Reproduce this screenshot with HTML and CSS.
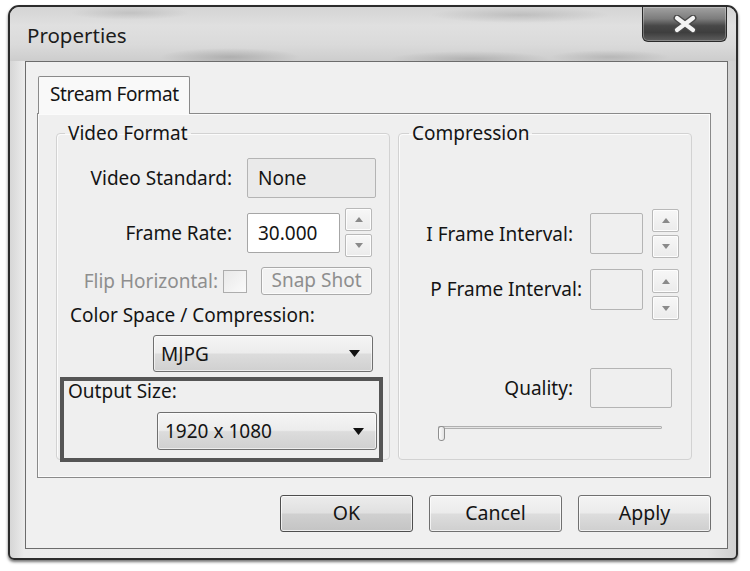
FILE: index.html
```html
<!DOCTYPE html>
<html>
<head>
<meta charset="utf-8">
<title>Properties</title>
<link rel="stylesheet" href="styles.css">
</head>
<body>
<div class="window">
  <div class="titlebar">
    <div class="title">Properties</div>
    <div class="close">
      <svg width="26" height="18" viewBox="0 0 26 18">
        <path d="M5 3 L21 15 M21 3 L5 15" stroke="#4a4a4a" stroke-width="7" stroke-linecap="round" fill="none"/>
        <path d="M5 3 L21 15 M21 3 L5 15" stroke="#f4f4f4" stroke-width="4.2" stroke-linecap="round" fill="none"/>
      </svg>
    </div>
  </div>
  <div class="frame">
    <div class="client">
      <div class="tabs"><div class="tab">Stream Format</div></div>
      <div class="page">
        <fieldset class="group group-video">
          <legend class="legend">Video Format</legend>
          <div class="row row-std">
            <span class="lbl lbl-main">Video Standard:</span>
            <div class="field field-none">None</div>
          </div>
          <div class="row row-rate">
            <span class="lbl lbl-main">Frame Rate:</span>
            <div class="field field-rate">30.000</div>
            <div class="spin spin-rate">
              <div class="spin-btn"><svg width="8" height="5" viewBox="0 0 8 5"><polygon points="4,0 8,5 0,5" fill="#8a8a8a"/></svg></div>
              <div class="spin-btn"><svg width="8" height="5" viewBox="0 0 8 5"><polygon points="0,0 8,0 4,5" fill="#8a8a8a"/></svg></div>
            </div>
          </div>
          <div class="row row-flip">
            <span class="lbl lbl-flip disabled">Flip Horizontal:</span>
            <div class="check"></div>
            <div class="snap disabled">Snap Shot</div>
          </div>
          <div class="text-row">Color Space / Compression:</div>
          <div class="combo combo-mjpg">
            <span class="combo-text">MJPG</span>
            <svg class="combo-arrow" width="11" height="7" viewBox="0 0 11 7"><polygon points="0,0 11,0 5.5,7" fill="#111"/></svg>
          </div>
          <div class="output">
            <div class="output-label">Output Size:</div>
            <div class="combo combo-size">
              <span class="combo-text">1920 x 1080</span>
              <svg class="combo-arrow" width="11" height="7" viewBox="0 0 11 7"><polygon points="0,0 11,0 5.5,7" fill="#111"/></svg>
            </div>
          </div>
        </fieldset>
        <fieldset class="group group-comp">
          <legend class="legend legend-comp">Compression</legend>
          <div class="row row-i">
            <span class="lbl lbl-i">I Frame Interval:</span>
            <div class="field field-small field-i"></div>
            <div class="spin spin-i">
              <div class="spin-btn"><svg width="8" height="5" viewBox="0 0 8 5"><polygon points="4,0 8,5 0,5" fill="#8a8a8a"/></svg></div>
              <div class="spin-btn"><svg width="8" height="5" viewBox="0 0 8 5"><polygon points="0,0 8,0 4,5" fill="#8a8a8a"/></svg></div>
            </div>
          </div>
          <div class="row row-p">
            <span class="lbl lbl-p">P Frame Interval:</span>
            <div class="field field-small field-p"></div>
            <div class="spin spin-p">
              <div class="spin-btn"><svg width="8" height="5" viewBox="0 0 8 5"><polygon points="4,0 8,5 0,5" fill="#8a8a8a"/></svg></div>
              <div class="spin-btn"><svg width="8" height="5" viewBox="0 0 8 5"><polygon points="0,0 8,0 4,5" fill="#8a8a8a"/></svg></div>
            </div>
          </div>
          <div class="row row-q">
            <span class="lbl lbl-q">Quality:</span>
            <div class="field field-small field-q"></div>
          </div>
          <div class="slider">
            <div class="slider-track"></div>
            <div class="slider-thumb"></div>
          </div>
        </fieldset>
      </div>
      <div class="buttons">
        <div class="btn btn-default">OK</div>
        <div class="btn">Cancel</div>
        <div class="btn">Apply</div>
      </div>
    </div>
  </div>
</div>
</body>
</html>
```
FILE: styles.css
```css
* { box-sizing: border-box; }

body {
  margin: 0;
  width: 750px;
  height: 571px;
  overflow: hidden;
  background: #ffffff;
  font-family: "Noto Sans", "Open Sans", sans-serif;
  font-size: 19px;
  color: #141414;
}

.window {
  margin: 5px 0 0 8px;
  width: 730px;
  height: 555px;
  border: 2px solid #2c2c2c;
  border-radius: 11px 11px 6px 6px;
  background: linear-gradient(90deg, #d6d6d6 0, #ebebeb 14px, #e8e8e8 50%, #e2e2e2 96%, #cfcfcf 100%);
  display: flex;
  flex-direction: column;
  overflow: hidden;
  box-shadow: 0 2px 3px rgba(0, 0, 0, 0.55);
}

.titlebar {
  height: 54px;
  flex: none;
  display: flex;
  align-items: flex-start;
  background:
    radial-gradient(ellipse 70px 9px at 220px 50px, rgba(0,0,0,0.16), rgba(0,0,0,0)),
    radial-gradient(ellipse 80px 8px at 460px 52px, rgba(0,0,0,0.14), rgba(0,0,0,0)),
    radial-gradient(ellipse 60px 7px at 600px 50px, rgba(0,0,0,0.12), rgba(0,0,0,0)),
    radial-gradient(ellipse 90px 8px at 510px 8px, rgba(0,0,0,0.12), rgba(0,0,0,0)),
    radial-gradient(ellipse 60px 7px at 120px 6px, rgba(0,0,0,0.10), rgba(0,0,0,0)),
    linear-gradient(180deg, #d4d4d4 0%, #e0e0e0 35%, #dadada 70%, #cdcdcd 100%);
}

.title {
  padding: 16px 0 0 17px;
  font-size: 20.5px;
  line-height: 24px;
  color: #1c1c1c;
}

.close {
  margin-left: auto;
  margin-right: 9px;
  width: 85px;
  height: 35px;
  flex: none;
  border: 1px solid #2a2a2a;
  border-top: none;
  border-radius: 0 0 6px 6px;
  background: linear-gradient(180deg, #a2a2a2 0%, #7c7c7c 35%, #484848 55%, #3e3e3e 75%, #5e5e5e 100%);
  box-shadow: inset 0 0 0 1px rgba(255, 255, 255, 0.28);
  display: flex;
  align-items: center;
  justify-content: center;
}

.frame {
  flex: 1;
  display: flex;
  padding: 0 8px 9px 15px;
}

.client {
  flex: 1;
  display: flex;
  flex-direction: column;
  border: 1px solid #6c6c6c;
  background: #f0f0f0;
  padding: 14px 16px 0 11px;
}

.tabs {
  display: flex;
  height: 38px;
  margin-bottom: -1px;
  position: relative;
  z-index: 1;
}

.tab {
  margin-left: 1px;
  width: 152px;
  height: 38px;
  border: 1px solid #8a8a8a;
  border-bottom: none;
  border-radius: 2px 2px 0 0;
  background: #f9f9f9;
  padding: 6px 0 0 11px;
  line-height: 22px;
  letter-spacing: -0.35px;
}

.page {
  height: 365px;
  border: 1px solid #8a8a8a;
  background: #efefef;
  box-shadow: inset 0 0 0 1px #fbfbfb;
  padding: 8px 18px 17px 18px;
  display: flex;
  gap: 8px;
}

.group {
  margin: 0;
  padding: 0;
  min-width: 0;
  border: 1px solid #d2d2d2;
  border-radius: 4px;
  box-shadow: inset 1px 1px 0 #fbfbfb;
}

.group-video { width: 334px; }
.group-comp { width: 294px; }

.legend {
  margin-left: 8px;
  padding: 0 3px;
  line-height: 22px;
}

.legend-comp { margin-left: 10px; }

.row {
  display: flex;
  align-items: center;
}

.lbl {
  flex: none;
  text-align: right;
  white-space: nowrap;
}

.disabled { color: #8e8e8e; }

.lbl-main { width: 175px; }

.field {
  flex: none;
  border: 1px solid #b4b4b4;
  border-radius: 2px;
  line-height: 38px;
}

.row-std { margin-top: 14px; height: 40px; }

.field-none {
  margin-left: 15px;
  width: 129px;
  height: 40px;
  background: #eaeaea;
  padding-left: 10px;
}

.row-rate { margin-top: 10px; height: 49px; }

.field-rate {
  margin-left: 15px;
  width: 93px;
  height: 40px;
  background: #ffffff;
  border-color: #a6a6a6;
  padding-left: 10px;
}

.spin {
  flex: none;
  width: 27px;
  display: flex;
  flex-direction: column;
  gap: 3px;
  align-self: stretch;
}

.spin-rate { margin-left: 5px; }

.spin-btn {
  flex: 1;
  border: 1px solid #b9b9b9;
  border-radius: 2px;
  background: linear-gradient(180deg, #f7f7f7, #ebebeb);
  box-shadow: inset 0 0 0 1px #fdfdfd;
  display: flex;
  align-items: center;
  justify-content: center;
}

.row-flip { margin-top: 10px; height: 28px; }

.lbl-flip { width: 161px; line-height: 28px; }

.check {
  flex: none;
  margin-left: 5px;
  width: 24px;
  height: 23px;
  border: 1px solid #adadad;
  background: linear-gradient(135deg, #e9e9e9, #fafafa);
}

.snap {
  flex: none;
  margin-left: 14px;
  width: 111px;
  height: 28px;
  border: 1px solid #aaaaaa;
  border-radius: 3px;
  background: #f2f2f2;
  box-shadow: inset 0 0 0 1px #fbfbfb;
  text-align: center;
  line-height: 25px;
}

.text-row {
  margin-top: 9px;
  padding-left: 13px;
  line-height: 22px;
  white-space: nowrap;
}

.combo {
  display: flex;
  align-items: center;
  width: 220px;
  border: 1px solid #6f6f6f;
  border-radius: 3px;
  background: linear-gradient(180deg, #f5f5f5 0%, #ececec 48%, #dcdcdc 52%, #d0d0d0 100%);
  box-shadow: inset 0 0 0 1px rgba(255, 255, 255, 0.6);
  padding: 0 12px 0 7px;
}

.combo-text { flex: 1; }

.combo-arrow { flex: none; }

.combo-mjpg {
  margin-top: 9px;
  margin-left: 96px;
  height: 37px;
}

.output {
  margin: 5px 0 -3px 3px;
  width: 323px;
  border: 4px solid #555555;
  padding: 0 0 8px 4px;
}

.output-label { line-height: 20px; }

.combo-size {
  margin-top: 11px;
  margin-left: 89px;
  height: 38px;
}

.field-small { background: #efefef; }

.row-i { margin-top: 65px; height: 49px; }
.lbl-i { width: 174px; }
.field-i { margin-left: 17px; width: 53px; height: 41px; }
.spin-i { margin-left: 9px; }

.row-p { margin-top: 11px; height: 51px; align-items: flex-start; }
.lbl-p { width: 183px; line-height: 41px; }
.field-p { margin-left: 8px; width: 53px; height: 41px; }
.spin-p { margin-left: 9px; }

.row-q { margin-top: 48px; height: 40px; }
.lbl-q { width: 174px; line-height: 40px; }
.field-q { margin-left: 17px; width: 82px; height: 40px; }

.slider {
  position: relative;
  margin: 18px 0 0 39px;
  width: 224px;
  height: 15px;
}

.slider-track {
  margin-top: 3px;
  height: 3px;
  border: 1px solid #b0b0b0;
  border-radius: 1px;
  background: #e4e4e4;
}

.slider-thumb {
  position: absolute;
  left: 0;
  top: 0;
  width: 7px;
  height: 15px;
  border: 1px solid #8f8f8f;
  border-radius: 3px;
  background: linear-gradient(90deg, #fdfdfd, #e2e2e2);
}

.buttons {
  display: flex;
  justify-content: flex-end;
  gap: 16px;
  margin-top: 17px;
}

.btn {
  width: 133px;
  height: 37px;
  border: 1px solid #707070;
  border-radius: 3px;
  background: linear-gradient(180deg, #f4f4f4 0%, #ebebeb 48%, #dddddd 52%, #cfcfcf 100%);
  box-shadow: inset 0 0 0 1px rgba(255, 255, 255, 0.7);
  text-align: center;
  line-height: 34px;
  font-size: 19.5px;
}

.btn-default {
  border-color: #4e4e4e;
  background: linear-gradient(180deg, #ececec 0%, #e0e0e0 48%, #d0d0d0 52%, #c4c4c4 100%);
}
```
